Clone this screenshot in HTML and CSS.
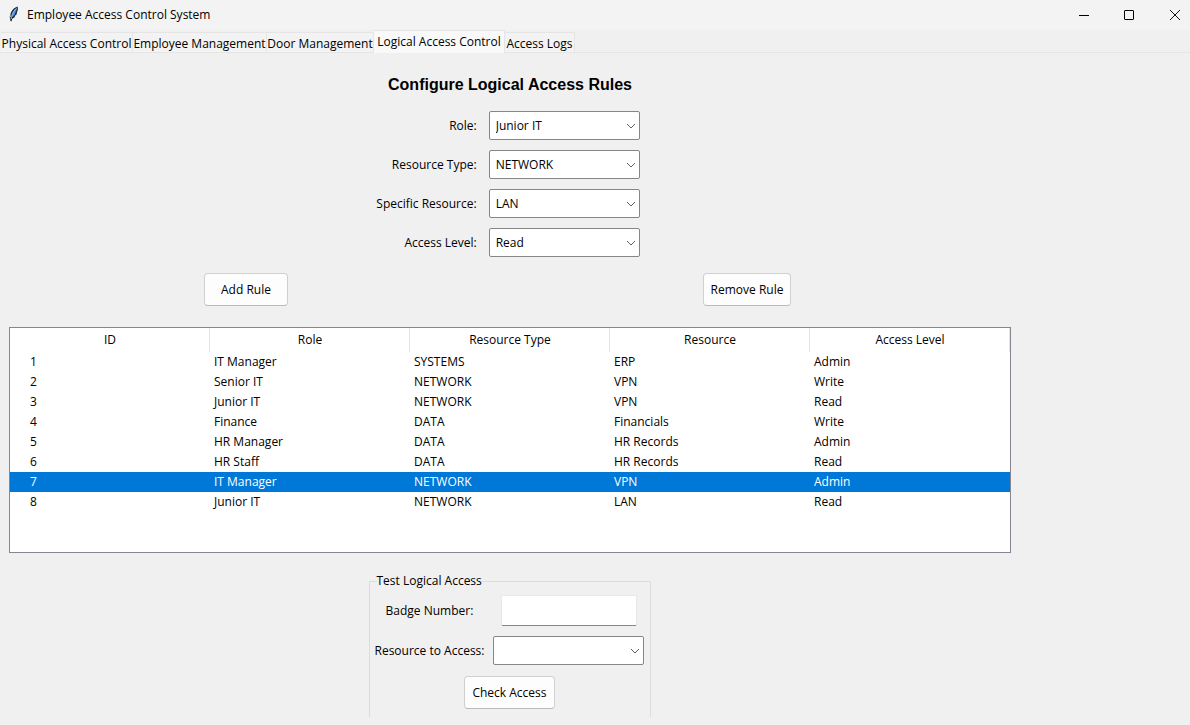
FILE: index.html
```html
<!DOCTYPE html>
<html lang="en">
<head>
<meta charset="utf-8">
<meta name="viewport" content="width=device-width, initial-scale=1">
<title>Employee Access Control System</title>
<link rel="stylesheet" href="styles.css">
</head>
<body class="window">
<header class="titlebar">
  <svg class="app-icon" viewBox="0 0 12 16" width="12" height="16" aria-hidden="true">
    <path d="M3 11.6 C1.2 8 4 2.6 9.4 0.6 C10.4 2.4 9.9 4.6 9 6.2 L8.6 8.4 L7.4 9.2 L6.4 11.4 L4.4 12.6 L3.4 15.4 L2.4 15 L2.2 12.4 L1.4 10.2 Z" fill="#1d2733"/>
    <path d="M3.4 10.6 C3.4 7.4 5.4 3.6 8.8 1.8 C9.2 3.4 8.4 5 7.6 6 L6.8 8.4 L5 10.4 L3.9 11 Z" fill="#4a8fdc"/>
    <path d="M3.2 13 C3.8 8.8 5.6 5 8.2 2.6" fill="none" stroke="#a8ccf2" stroke-width="0.7"/>
  </svg>
  <h1 class="app-title">Employee Access Control System</h1>
  <div class="caption-buttons">
    <button class="caption-button" type="button" aria-label="Minimize"><svg width="12" height="12" viewBox="0 0 12 12"><path d="M2 6.5H12" stroke="#000" fill="none"/></svg></button>
    <button class="caption-button" type="button" aria-label="Maximize"><svg width="12" height="12" viewBox="0 0 12 12"><rect x="1.5" y="1.5" width="9" height="9" rx="0.5" stroke="#000" fill="none"/></svg></button>
    <button class="caption-button" type="button" aria-label="Close"><svg width="12" height="12" viewBox="0 0 12 12"><path d="M1 1L11 11M11 1L1 11" stroke="#111" fill="none"/></svg></button>
  </div>
</header>
<nav class="tabs" role="tablist">
  <button class="tab" type="button" role="tab">Physical Access Control</button>
  <button class="tab" type="button" role="tab">Employee Management</button>
  <button class="tab" type="button" role="tab">Door Management</button>
  <button class="tab tab-active" type="button" role="tab" aria-selected="true">Logical Access Control</button>
  <button class="tab" type="button" role="tab">Access Logs</button>
</nav>
<main class="page">
  <h2 class="heading">Configure Logical Access Rules</h2>
  <form class="rule-form">
    <label for="role">Role:</label>
    <div class="combo"><select id="role"><option>Junior IT</option></select><svg class="chevron" width="10" height="6" viewBox="0 0 10 6"><path d="M1 1L5 5L9 1"/></svg></div>
    <label for="type">Resource Type:</label>
    <div class="combo"><select id="type"><option>NETWORK</option></select><svg class="chevron" width="10" height="6" viewBox="0 0 10 6"><path d="M1 1L5 5L9 1"/></svg></div>
    <label for="specific">Specific Resource:</label>
    <div class="combo"><select id="specific"><option>LAN</option></select><svg class="chevron" width="10" height="6" viewBox="0 0 10 6"><path d="M1 1L5 5L9 1"/></svg></div>
    <label for="level">Access Level:</label>
    <div class="combo"><select id="level"><option>Read</option></select><svg class="chevron" width="10" height="6" viewBox="0 0 10 6"><path d="M1 1L5 5L9 1"/></svg></div>
  </form>
  <div class="actions">
    <button class="button button-wide" type="button">Add Rule</button>
    <button class="button" type="button">Remove Rule</button>
  </div>
  <div class="table-frame">
    <table class="rules">
      <thead><tr><th>ID</th><th>Role</th><th>Resource Type</th><th>Resource</th><th>Access Level</th></tr></thead>
      <tbody>
        <tr><td>1</td><td>IT Manager</td><td>SYSTEMS</td><td>ERP</td><td>Admin</td></tr>
        <tr><td>2</td><td>Senior IT</td><td>NETWORK</td><td>VPN</td><td>Write</td></tr>
        <tr><td>3</td><td>Junior IT</td><td>NETWORK</td><td>VPN</td><td>Read</td></tr>
        <tr><td>4</td><td>Finance</td><td>DATA</td><td>Financials</td><td>Write</td></tr>
        <tr><td>5</td><td>HR Manager</td><td>DATA</td><td>HR Records</td><td>Admin</td></tr>
        <tr><td>6</td><td>HR Staff</td><td>DATA</td><td>HR Records</td><td>Read</td></tr>
        <tr class="selected"><td>7</td><td>IT Manager</td><td>NETWORK</td><td>VPN</td><td>Admin</td></tr>
        <tr><td>8</td><td>Junior IT</td><td>NETWORK</td><td>LAN</td><td>Read</td></tr>
      </tbody>
    </table>
  </div>
  <fieldset class="test">
    <legend>Test Logical Access</legend>
    <div class="test-grid">
      <label for="badge">Badge Number:</label>
      <input class="entry" id="badge" type="text">
      <label for="target">Resource to Access:</label>
      <div class="combo"><select id="target"><option></option></select><svg class="chevron" width="10" height="6" viewBox="0 0 10 6"><path d="M1 1L5 5L9 1"/></svg></div>
    </div>
    <button class="button" type="button">Check Access</button>
  </fieldset>
</main>
</body>
</html>
```
FILE: styles.css
```css
* { box-sizing: border-box; }

.window {
  margin: 0;
  min-height: 100vh;
  background: #f0f0f0;
  color: #000;
  font: 12px/16px "Segoe UI", "Open Sans", "Noto Sans", sans-serif;
}

button, input, select { font: inherit; color: inherit; }

.titlebar {
  display: flex;
  align-items: center;
  height: 30px;
  padding-left: 8px;
  background: #f3f3f3;
}
.app-icon { margin: 0 7px 2px 0; }
.app-title { margin: 0; font-size: 12px; font-weight: 400; }
.caption-buttons { display: flex; margin-left: auto; margin-right: -8px; }
.caption-button {
  display: grid;
  place-items: center;
  width: 46px;
  height: 28px;
  margin: 0;
  padding: 0;
  border: 0;
  background: none;
}

.tabs {
  display: grid;
  grid-template-columns: 132px 134px 107px 131px 70px;
  align-items: end;
  height: 23px;
  padding-left: 1px;
  border-bottom: 1px solid #e5e5e5;
}
.tab {
  height: 20px;
  padding: 2px 0 0;
  border: 1px solid #e5e5e5;
  border-width: 1px 1px 0 0;
  background: #f3f3f3;
  white-space: nowrap;
}
.tab-active {
  height: 23px;
  margin-bottom: -1px;
  padding: 0;
  background: #f9f9f9;
}

.page {
  display: flex;
  flex-direction: column;
  align-items: center;
  max-width: 1020px;
  padding: 22px 9px 8px;
}
.heading {
  margin: 0 0 17px;
  font: 700 16px/19px Arial, "Liberation Sans", sans-serif;
}

.rule-form {
  display: grid;
  grid-template-columns: auto 151px;
  align-items: center;
  gap: 10px 12px;
  padding-right: 4px;
}
.rule-form label { text-align: right; }

.combo { display: grid; align-items: center; }
.combo select {
  grid-area: 1 / 1;
  width: 100%;
  height: 29px;
  padding: 0 20px 0 6px;
  border: 1px solid #868686;
  border-radius: 2px;
  background: #fff;
  appearance: none;
}
.chevron {
  grid-area: 1 / 1;
  justify-self: end;
  margin-right: 4px;
  fill: none;
  stroke: #606060;
  pointer-events: none;
}

.actions {
  display: grid;
  grid-template-columns: 79fr 88fr;
  justify-items: center;
  width: 100%;
  margin: 16px 0 21px;
}
.button {
  height: 33px;
  padding: 0 7px;
  border: 1px solid #d0d0d0;
  border-bottom-color: #bababa;
  border-radius: 4px;
  background: #fdfdfd;
}
.button-wide { min-width: 84px; }

.table-frame {
  width: 100%;
  min-height: 226px;
  border: 1px solid #828790;
  background: #fff;
}
.rules {
  width: 100%;
  border-collapse: collapse;
  table-layout: fixed;
}
.rules th {
  height: 24px;
  padding: 0;
  font-weight: 400;
  box-shadow: inset -1px 0 #e5e5e5;
}
.rules td { height: 20px; padding: 0 4px; }
.rules td:first-child { padding-left: 20px; }
.selected { background: #0078d7; color: #fff; }

.test {
  display: flex;
  flex-direction: column;
  align-items: center;
  margin: 20px 0 0;
  padding: 6px 6px 8px 5px;
  border: 1px solid #dcdcdc;
  border-bottom: 0;
}
.test legend { margin-left: 2px; padding: 0; }
.test-grid {
  display: grid;
  grid-template-columns: auto 151px;
  align-items: center;
  justify-items: center;
  gap: 10px 9px;
  margin-bottom: 11px;
}
.test-grid .combo { width: 100%; }
.entry {
  width: 136px;
  height: 31px;
  padding: 0 6px;
  border: 1px solid #e8e8e8;
  border-bottom-color: #868686;
  border-radius: 2px;
  background: #fff;
}
```
